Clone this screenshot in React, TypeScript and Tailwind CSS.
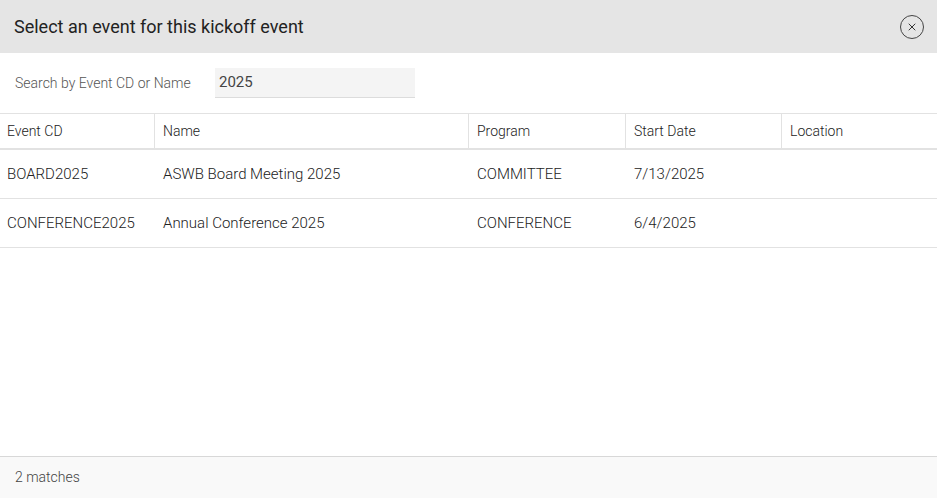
import { X } from 'lucide-react';

const columns = [
  { name: 'Event CD', width: 'w-[154px]' },
  { name: 'Name', width: 'w-[314px]' },
  { name: 'Program', width: 'w-[157px]' },
  { name: 'Start Date', width: 'w-[156px]' },
  { name: 'Location', width: 'flex-1' },
];

const events = [
  { cd: 'BOARD2025', name: 'ASWB Board Meeting 2025', program: 'COMMITTEE', start: '7/13/2025', location: '' },
  { cd: 'CONFERENCE2025', name: 'Annual Conference 2025', program: 'CONFERENCE', start: '6/4/2025', location: '' },
];

export default function App() {
  return (
    <div className="w-[937px] h-[498px] bg-white flex flex-col overflow-hidden font-['Roboto',sans-serif]">
      {/* Header */}
      <div className="h-[53px] shrink-0 bg-[#e5e5e5] flex items-center justify-between pl-[14px] pr-[13px]">
        <h2 className="text-[18px] text-[#222] font-normal">Select an event for this kickoff event</h2>
        <button className="h-6 w-6 rounded-full border border-[#444] flex items-center justify-center text-[#333]">
          <X className="h-3 w-3" strokeWidth={2} />
        </button>
      </div>

      {/* Search */}
      <div className="h-[60px] shrink-0 flex items-center px-[15px]">
        <label className="text-[14px] font-light text-[#555] w-[200px]">Search by Event CD or Name</label>
        <div className="w-[200px] h-[30px] bg-[#f4f4f4] border-b border-[#dcdcdc] flex items-center px-1 text-[15px] text-[#444]">
          2025
        </div>
      </div>

      {/* Table */}
      <div className="flex-1 flex flex-col">
        <div className="flex h-[37px] border-t border-[#e2e2e2] border-b-2 border-b-[#e2e2e2]">
          {columns.map((col, i) => (
            <div
              key={col.name}
              className={`${col.width} flex items-center text-[14px] font-light text-[#222] ${i === 0 ? 'pl-[7px]' : 'pl-2 border-l border-[#e2e2e2]'}`}
            >
              {col.name}
            </div>
          ))}
        </div>
        {events.map((ev) => (
          <div key={ev.cd} className="flex h-[49px] border-b border-[#e2e2e2] text-[15px] font-light text-[#222]">
            <div className="w-[154px] flex items-center pl-[7px] pt-px">{ev.cd}</div>
            <div className="w-[314px] flex items-center pl-[9px] pt-px">{ev.name}</div>
            <div className="w-[157px] flex items-center pl-[9px] pt-px">{ev.program}</div>
            <div className="w-[156px] flex items-center pl-[9px] pt-px">{ev.start}</div>
            <div className="flex-1 flex items-center pl-[9px] pt-px">{ev.location}</div>
          </div>
        ))}
      </div>

      {/* Footer */}
      <div className="h-[42px] shrink-0 bg-[#f9f9f9] border-t border-[#d8d8d8] flex items-center px-[15px] text-[14px] font-light text-[#444]">
        2 matches
      </div>
    </div>
  );
}
